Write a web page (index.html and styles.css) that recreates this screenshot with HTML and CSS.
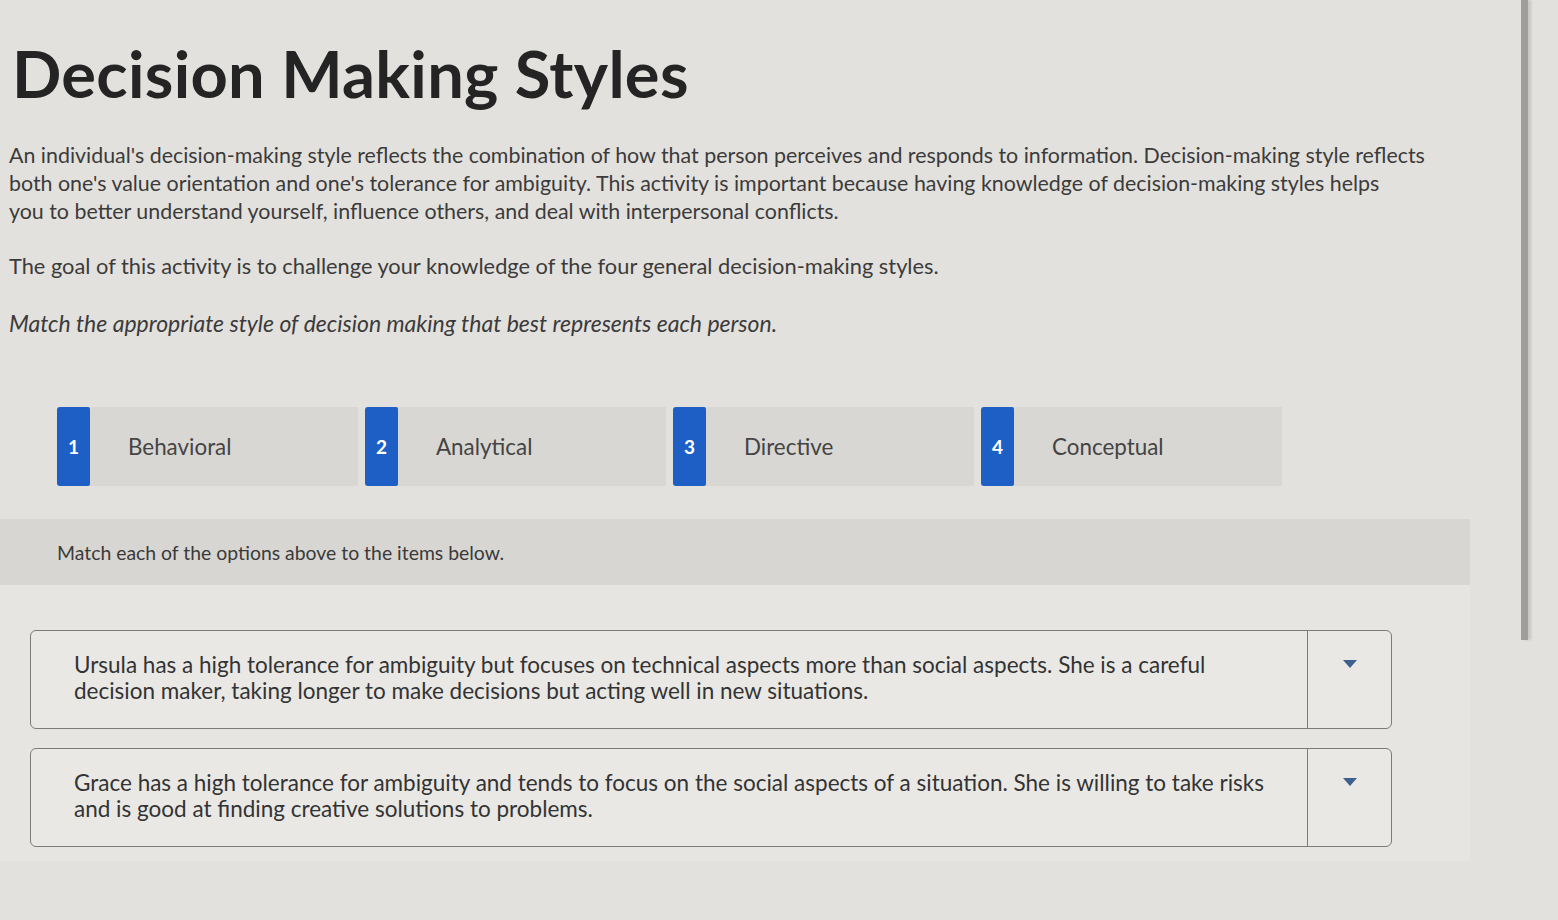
FILE: index.html
```html
<!DOCTYPE html>
<html lang="en">
<head>
<meta charset="utf-8">
<title>Decision Making Styles</title>
<link rel="stylesheet" href="styles.css">
</head>
<body>
<div class="screen">
  <main class="page">
    <h1 class="title">Decision Making Styles</h1>
    <p class="intro">An individual's decision-making style reflects the combination of how that person perceives and responds to information. Decision-making style reflects<br>both one's value orientation and one's tolerance for ambiguity. This activity is important because having knowledge of decision-making styles helps<br>you to better understand yourself, influence others, and deal with interpersonal conflicts.</p>
    <p class="goal">The goal of this activity is to challenge your knowledge of the four general decision-making styles.</p>
    <p class="instr">Match the appropriate style of decision making that best represents each person.</p>

    <div class="options">
      <div class="option"><span class="badge">1</span><span class="label">Behavioral</span></div>
      <div class="option"><span class="badge">2</span><span class="label">Analytical</span></div>
      <div class="option"><span class="badge">3</span><span class="label">Directive</span></div>
      <div class="option"><span class="badge">4</span><span class="label">Conceptual</span></div>
    </div>

    <section class="panel">
      <div class="panel-head">Match each of the options above to the items below.</div>
      <div class="items">
        <div class="item">
          <div class="item-text">Ursula has a high tolerance for ambiguity but focuses on technical aspects more than social aspects. She is a careful<br>decision maker, taking longer to make decisions but acting well in new situations.</div>
          <div class="item-select"><svg width="16" height="10" viewBox="0 0 16 10"><path d="M1 1 L15 1 L8 9 Z" fill="#3f5f8f"/></svg></div>
        </div>
        <div class="item">
          <div class="item-text">Grace has a high tolerance for ambiguity and tends to focus on the social aspects of a situation. She is willing to take risks<br>and is good at finding creative solutions to problems.</div>
          <div class="item-select"><svg width="16" height="10" viewBox="0 0 16 10"><path d="M1 1 L15 1 L8 9 Z" fill="#3f5f8f"/></svg></div>
        </div>
      </div>
    </section>
  </main>
  <div class="edge"><div class="edge-line"></div></div>
</div>
</body>
</html>
```

FILE: styles.css
```css
* { box-sizing: border-box; }
html, body { margin: 0; padding: 0; }
body {
  background: #e3e1dd;
  font-family: Lato, "Open Sans", "Liberation Sans", sans-serif;
  color: #3b3b3b;
  width: 1558px;
  height: 920px;
  overflow: hidden;
}
.screen {
  display: flex;
  height: 920px;
}
.page {
  width: 1518px;
  padding-top: 34px;
}
.title {
  margin: 0 0 0 12px;
  font-size: 65px;
  font-weight: 700;
  color: #242424;
  letter-spacing: 0.3px;
  line-height: 78px;
}
.intro, .goal, .instr {
  margin: 0 0 0 9px;
  font-size: 21.4px;
  line-height: 28px;
  white-space: nowrap;
}
.intro { margin-top: 29px; }
.goal { margin-top: 27px; font-size: 21.8px; }
.instr { margin-top: 29px; font-style: italic; font-size: 23px; }

.options {
  display: flex;
  gap: 7px;
  margin: 70px 0 0 57px;
}
.option {
  width: 301px;
  height: 79px;
  display: flex;
  align-items: center;
  background: #d9d7d3;
}
.badge {
  width: 33px;
  height: 79px;
  background: #1d5fc5;
  color: #fff;
  font-weight: 700;
  font-size: 19px;
  display: flex;
  align-items: center;
  justify-content: center;
  border-radius: 3px 2px 2px 3px;
}
.label {
  margin-left: 38px;
  font-size: 22.4px;
  color: #444;
}

.panel {
  margin-top: 33px;
  width: 1470px;
  height: 342px;
  background: #e6e5e2;
}
.panel-head {
  height: 66px;
  background: #d8d6d2;
  padding-left: 57px;
  display: flex;
  align-items: center;
  font-size: 19.4px;
  color: #3a3a3a;
}
.items {
  padding: 45px 0 0 30px;
  display: flex;
  flex-direction: column;
  gap: 19px;
}
.item {
  width: 1362px;
  height: 99px;
  display: flex;
  border: 1.5px solid #7c7b79;
  border-radius: 6px;
  background: #e9e8e5;
}
.item-text {
  flex: 1;
  padding: 21px 0 0 43px;
  font-size: 22.5px;
  line-height: 26px;
  color: #333;
  white-space: nowrap;
}
.item-select {
  width: 84px;
  border-left: 1.5px solid #7c7b79;
  display: flex;
  justify-content: center;
  padding-top: 28px;
}
.item-select svg { display: block; }

.edge {
  width: 40px;
  display: flex;
  padding-left: 3px;
}
.edge-line {
  width: 7px;
  height: 640px;
  background: #a09e9a;
  box-shadow: 3px 0 3px rgba(0,0,0,0.12);
}
```
